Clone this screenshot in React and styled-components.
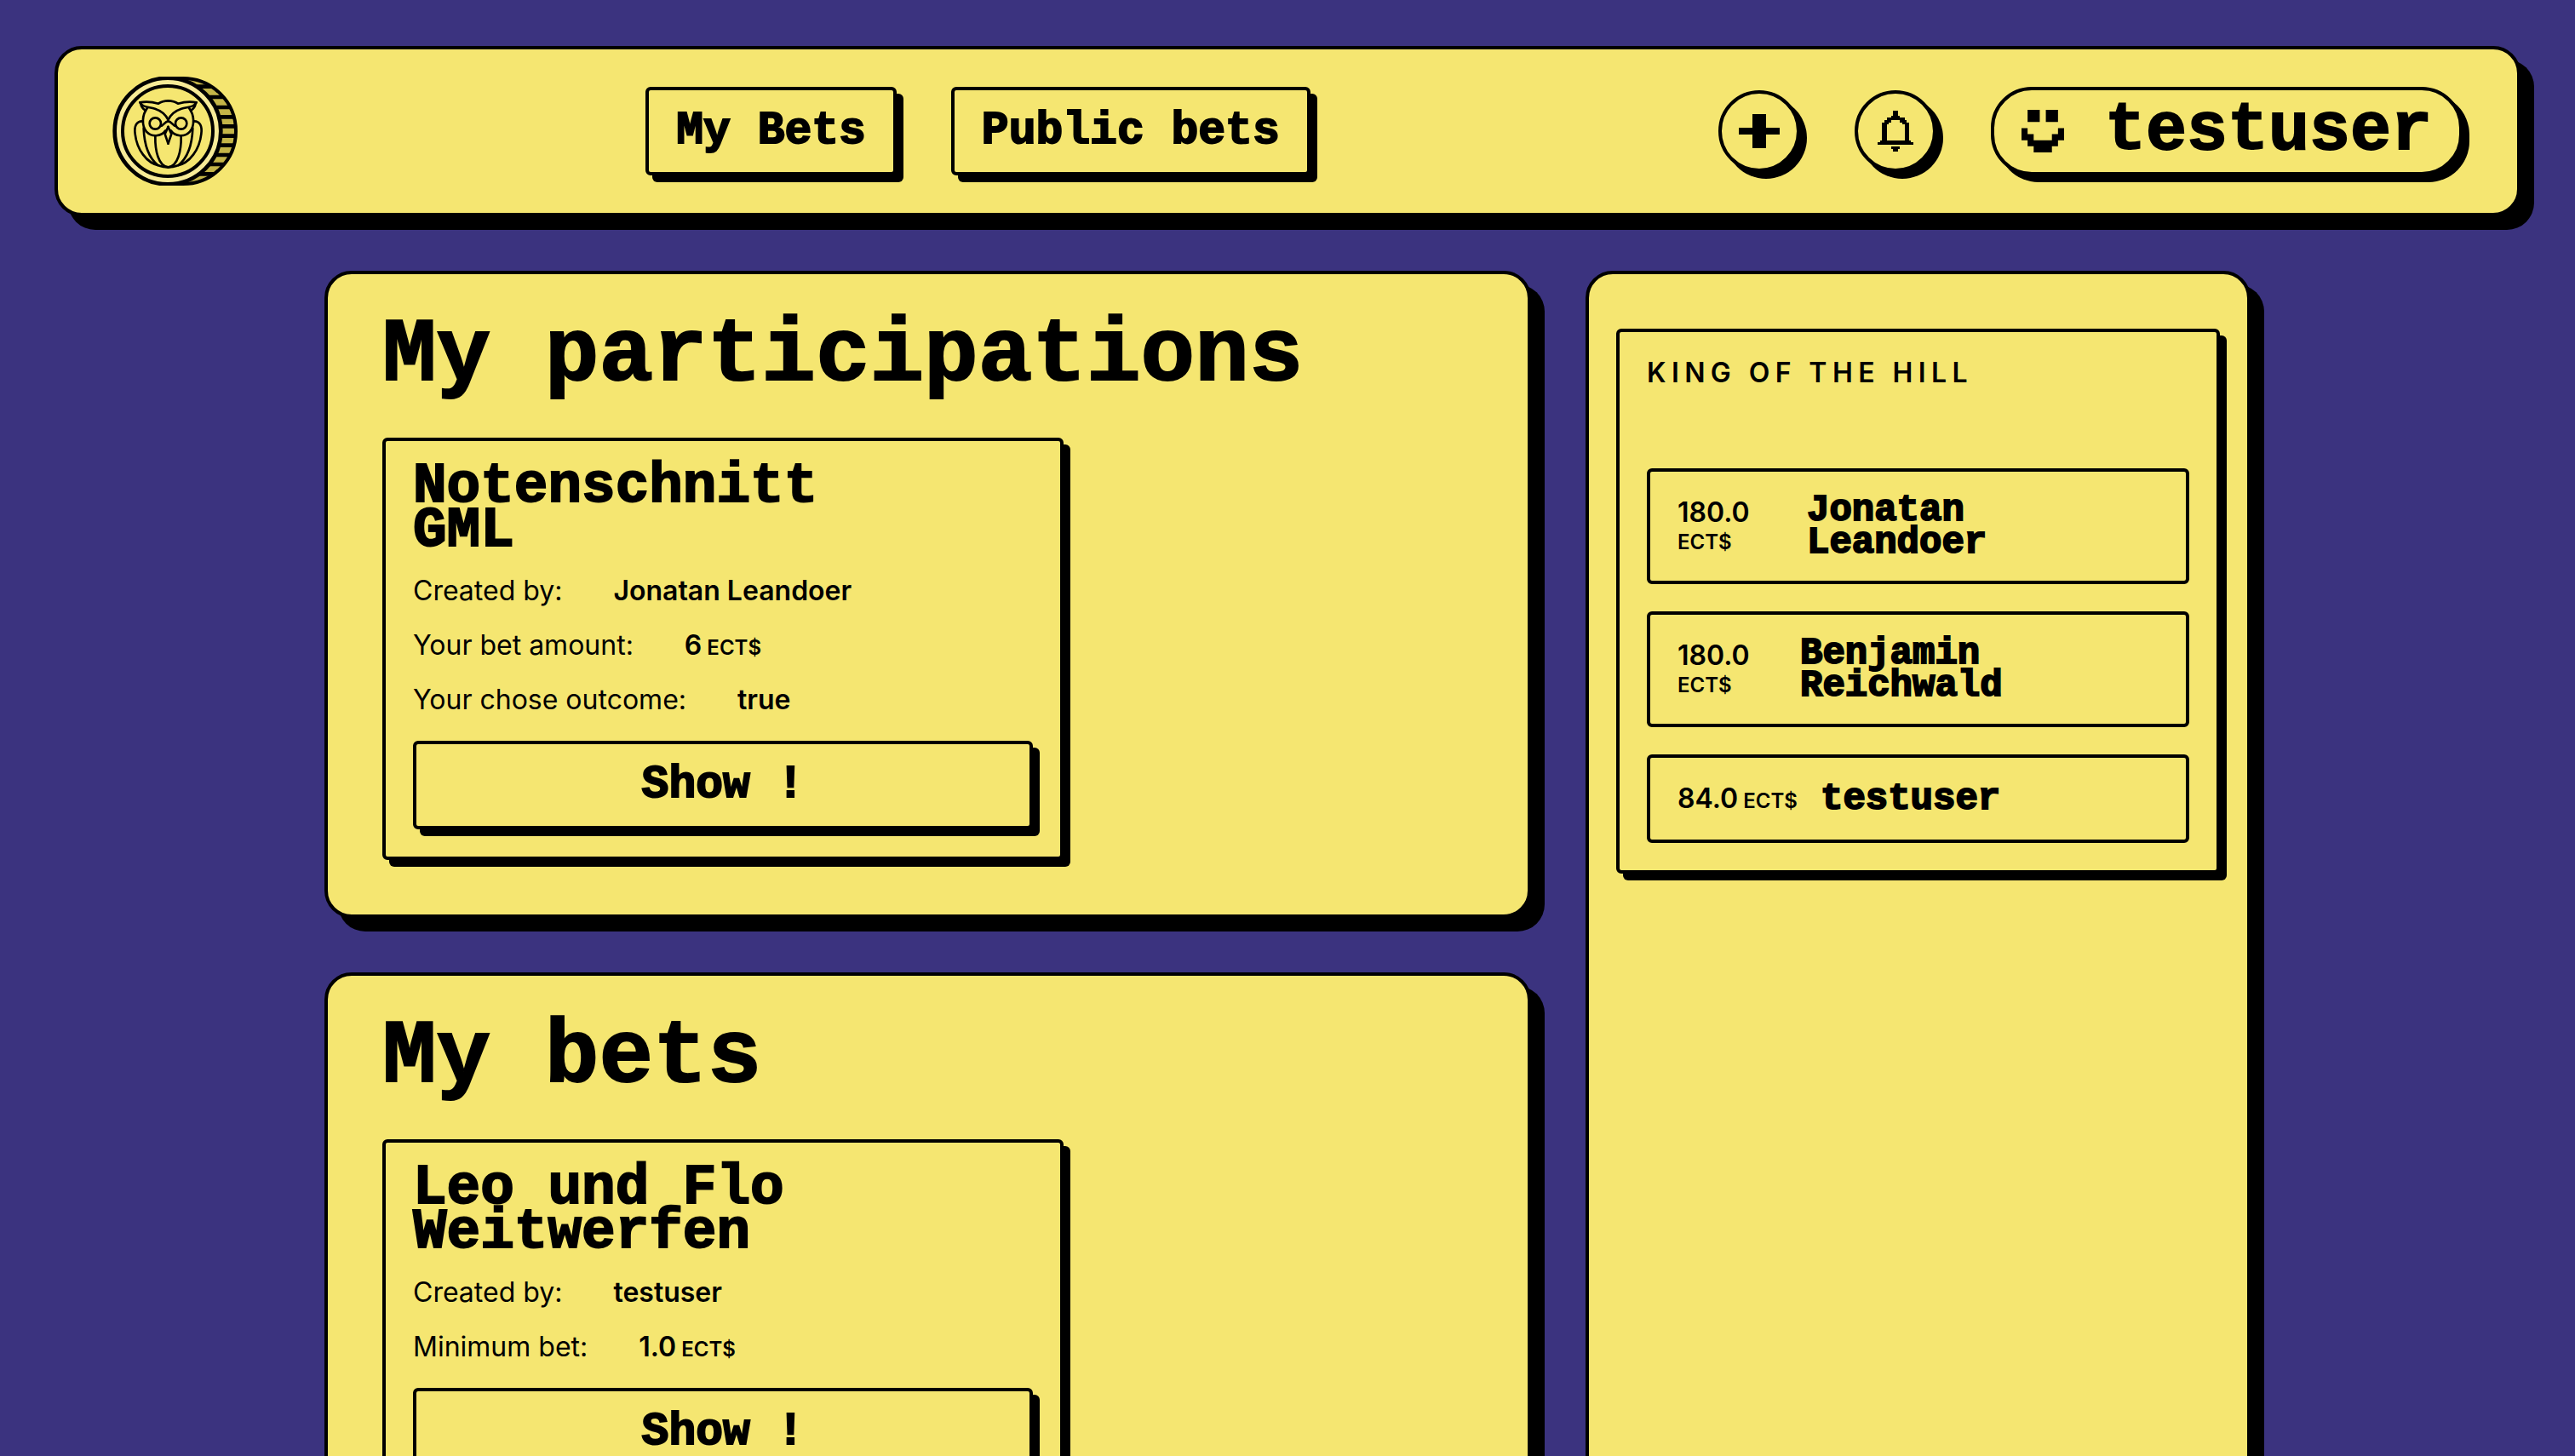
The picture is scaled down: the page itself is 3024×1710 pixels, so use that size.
import React from 'react';
import styled, { createGlobalStyle, css } from 'styled-components';

const colors = {
  yellow: '#f5e671',
  yellowLight: '#f7eb98',
  yellowDark: '#c4b548',
  purple: '#3b337f',
  ink: '#000000',
};

const GlobalStyle = createGlobalStyle`
  *, *::before, *::after { box-sizing: border-box; }
  html { scrollbar-width: none; }
  body {
    margin: 0;
    background: ${colors.purple};
    color: ${colors.ink};
    font-family: Inter, 'Liberation Sans', sans-serif;
    font-size: 32px;
    line-height: 32px;
  }
  h1, h2, h3, p, dl, dd, ol { margin: 0; padding: 0; }
`;

const pixelText = css`
  font-family: 'Liberation Mono', monospace;
  font-weight: 700;
  -webkit-text-stroke: 2px ${colors.ink};
`;

const box = css`
  background: ${colors.yellow};
  border: 4px solid ${colors.ink};
  border-radius: 6px;
`;

const Page = styled.div`
  display: flex;
  flex-direction: column;
  gap: 64px;
  padding: 54px 64px 64px;
`;

const Header = styled.header`
  ${box}
  display: flex;
  align-items: center;
  justify-content: space-between;
  min-height: 200px;
  padding: 0 64px;
  border-radius: 32px;
  box-shadow: 16px 16px 0 ${colors.ink};
`;

const Cluster = styled.div`
  display: flex;
  align-items: center;
  gap: 64px;
`;

const Nav = styled(Cluster).attrs({ as: 'nav' })``;

const Button = styled.button`
  ${box}
  ${pixelText}
  display: block;
  width: ${(p) => (p.$wide ? '100%' : 'auto')};
  padding: 32px;
  color: ${colors.ink};
  font-size: 53px;
  line-height: 32px;
  white-space: nowrap;
  box-shadow: 8px 8px 0 ${colors.ink};
  cursor: pointer;
`;

const RoundButton = styled.button`
  ${box}
  display: grid;
  place-items: center;
  width: 96px;
  height: 96px;
  padding: 0;
  border-radius: 50%;
  box-shadow: 8px 8px 0 ${colors.ink};
  cursor: pointer;
`;

const UserButton = styled.button`
  ${box}
  ${pixelText}
  display: flex;
  align-items: center;
  gap: 48px;
  height: 104px;
  padding: 0 32px;
  border-radius: 48px;
  color: ${colors.ink};
  font-size: 80px;
  line-height: 48px;
  box-shadow: 8px 8px 0 ${colors.ink};
  cursor: pointer;
`;

const Columns = styled.main`
  display: grid;
  grid-template-columns: minmax(0, 1fr) 781px;
  gap: 64px;
  width: 100%;
  max-width: 2262px;
  margin: 0 auto;
`;

const Stack = styled.div`
  display: flex;
  flex-direction: column;
  gap: 64px;
`;

const Panel = styled.section`
  ${box}
  display: flex;
  flex-direction: column;
  gap: 64px;
  padding: 64px;
  border-radius: 32px;
  box-shadow: 16px 16px 0 ${colors.ink};
`;

const SidePanel = styled(Panel).attrs({ as: 'aside' })`
  padding: 64px 32px;
`;

const PanelTitle = styled.h1`
  ${pixelText}
  font-size: 106px;
  line-height: 64px;
`;

const Card = styled.article`
  ${box}
  display: flex;
  flex-direction: column;
  gap: 32px;
  max-width: 800px;
  padding: 32px;
  box-shadow: 8px 8px 0 ${colors.ink};
`;

const CardTitle = styled.h2`
  ${pixelText}
  margin: -4px 0;
  font-size: 66px;
  line-height: 52px;
`;

const Facts = styled.dl`
  display: flex;
  flex-direction: column;
  gap: 32px;
`;

const Fact = styled.div`
  display: flex;
  gap: 60px;
`;

const FactValue = styled.dd`
  font-weight: 600;
`;

const Currency = styled.span`
  font-size: 24px;
  line-height: 24px;
`;

const Board = styled(Card).attrs({ as: 'section' })`
  max-width: none;
`;

const BoardTitle = styled.h3`
  margin-bottom: 64px;
  font-size: 32px;
  font-weight: 600;
  letter-spacing: 0.2em;
  text-transform: uppercase;
`;

const Ranking = styled.ol`
  display: flex;
  flex-direction: column;
  gap: 32px;
  list-style: none;
`;

const Rank = styled.li`
  ${box}
  display: flex;
  align-items: center;
  gap: 32px;
  padding: 32px;
`;

const Score = styled.span`
  flex: none;
  width: ${(p) => p.$width}px;
  font-weight: 600;
  white-space: ${(p) => (p.$oneLine ? 'nowrap' : 'normal')};
`;

const Player = styled.span`
  ${pixelText}
  margin: -8px 0;
  font-size: 44px;
  line-height: 38px;
`;

const lines = (parts) =>
  parts.map((part, i) => (
    <React.Fragment key={part}>
      {i > 0 && <br />}
      {part}
    </React.Fragment>
  ));

const Amount = ({ value }) => (
  <>
    {value}
    <Currency> ECT$</Currency>
  </>
);

const ridges = [65, 102, 138, 172, 205, 239, 272, 306, 339, 373];

const OwlHalf = () => (
  <>
    <circle cx="97" cy="105" r="20" />
    <path d="M43 31C66 27 90 30 108 35C118 28 130 25 142.500 25" />
    <path d="M43 31C54 50 74 46 96 53C120 61 134 74 142.500 92" />
    <path d="M46 36C48 47 54 54 63 60" />
    <path d="M70 49C50 74 48 112 66 134C84 154 118 152 133 130" />
    <path d="M115 114C124 116 130 98 142.500 97" />
    <path d="M142.500 117L131 142L142.500 176" />
    <path d="M53 97C30 96 22 116 26 142C32 196 66 245 112 254C122 258 132 259 142.500 259" />
    <path d="M56 122C58 176 74 226 106 252" />
    <path d="M97 149C96 200 108 256 142.500 259" />
  </>
);

const CoinLogo = () => (
  <svg width="147" height="128" viewBox="36 30 441 384" role="img" aria-label="Owl coin">
    <defs>
      <clipPath id="coin-edge">
        <circle cx="285" cy="222" r="188" />
      </clipPath>
    </defs>
    <rect x="231" y="30" width="54" height="384" fill={colors.ink} />
    <circle cx="285" cy="222" r="186" fill={colors.yellowDark} />
    <g clipPath="url(#coin-edge)" stroke={colors.ink} strokeWidth="14">
      {ridges.map((y) => (
        <path key={y} d={`M285 ${y}H477`} />
      ))}
    </g>
    <circle cx="285" cy="222" r="186" fill="none" stroke={colors.ink} strokeWidth="12" />
    <circle cx="231" cy="222" r="187" fill={colors.yellowLight} stroke={colors.ink} strokeWidth="14" />
    <circle cx="231" cy="222" r="159" fill={colors.yellow} stroke={colors.ink} strokeWidth="12" />
    <g transform="translate(90 90)" fill="none" stroke={colors.ink} strokeWidth="8" strokeLinejoin="round" strokeLinecap="round">
      <OwlHalf />
      <g transform="translate(285 0) scale(-1 1)">
        <OwlHalf />
      </g>
    </g>
  </svg>
);

const PlusIcon = () => (
  <svg width="48" height="40" viewBox="0 0 48 40" aria-hidden="true">
    <path d="M16 0h16v16h16v8h-16v16h-16v-16h-16v-8h16z" />
  </svg>
);

const BellIcon = () => (
  <svg width="42" height="48" viewBox="0 0 16 18" shapeRendering="crispEdges" aria-hidden="true">
    <path d="M7 0h2v2h1v1h2v1h1v1h1v8h1v1h1v1H0v-1h1v-1h1V5h1V4h1V3h2V2h1zM6 4v1H5v1H4v7h8V6h-1V5h-1V4zM6 16h4v1H9v1H7v-1H6z" />
  </svg>
);

const FaceIcon = () => (
  <svg width="50" height="50" viewBox="0 0 7 7" aria-hidden="true">
    <path d="M1 0h2v2H1zM4 0h2v2H4zM0 3h1v1h1v1h3V4h1V3h1v2H6v1H5v1H2V6H1V5H0z" />
  </svg>
);

const participations = [
  {
    title: ['Notenschnitt', 'GML'],
    facts: [
      ['Created by:', 'Jonatan Leandoer'],
      ['Your bet amount:', <Amount value="6" />],
      ['Your chose outcome:', 'true'],
    ],
  },
];

const bets = [
  {
    title: ['Leo und Flo', 'Weitwerfen'],
    facts: [
      ['Created by:', 'testuser'],
      ['Minimum bet:', <Amount value="1.0" />],
    ],
  },
];

const ranking = [
  { score: '180.0', name: ['Jonatan', 'Leandoer'], width: 120 },
  { score: '180.0', name: ['Benjamin', 'Reichwald'], width: 112 },
  { score: '84.0', name: ['testuser'], width: 136, oneLine: true },
];

const BetPanel = ({ title, items }) => (
  <Panel>
    <PanelTitle>{title}</PanelTitle>
    {items.map((bet) => (
      <Card key={bet.title[0]}>
        <CardTitle>{lines(bet.title)}</CardTitle>
        <Facts>
          {bet.facts.map(([label, value]) => (
            <Fact key={label}>
              <dt>{label}</dt>
              <FactValue>{value}</FactValue>
            </Fact>
          ))}
        </Facts>
        <Button type="button" $wide>Show !</Button>
      </Card>
    ))}
  </Panel>
);

export default function App() {
  return (
    <>
      <GlobalStyle />
      <Page>
        <Header>
          <CoinLogo />
          <Nav>
            <Button type="button">My Bets</Button>
            <Button type="button">Public bets</Button>
          </Nav>
          <Cluster>
            <RoundButton type="button" aria-label="Create bet"><PlusIcon /></RoundButton>
            <RoundButton type="button" aria-label="Notifications"><BellIcon /></RoundButton>
            <UserButton type="button"><FaceIcon />testuser</UserButton>
          </Cluster>
        </Header>
        <Columns>
          <Stack>
            <BetPanel title="My participations" items={participations} />
            <BetPanel title="My bets" items={bets} />
          </Stack>
          <SidePanel>
            <Board>
              <BoardTitle>King of the hill</BoardTitle>
              <Ranking>
                {ranking.map(({ score, name, width, oneLine }) => (
                  <Rank key={name[0]}>
                    <Score $width={width} $oneLine={oneLine}><Amount value={score} /></Score>
                    <Player>{lines(name)}</Player>
                  </Rank>
                ))}
              </Ranking>
            </Board>
          </SidePanel>
        </Columns>
      </Page>
    </>
  );
}
